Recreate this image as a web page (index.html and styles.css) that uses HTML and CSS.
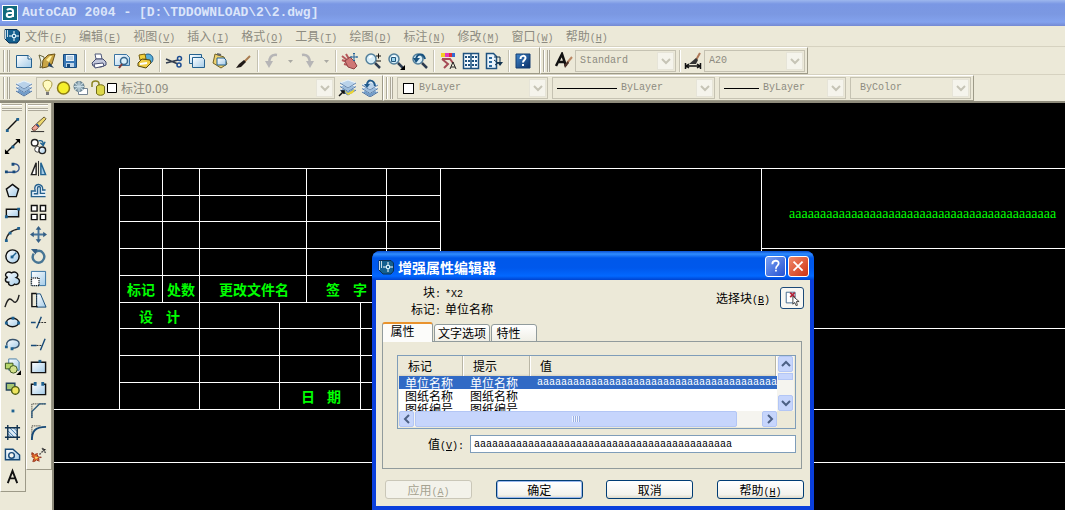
FILE: index.html
```html
<!DOCTYPE html>
<html lang="zh-CN">
<head>
<meta charset="utf-8">
<title>AutoCAD 2004 - [D:\TDDOWNLOAD\2\2.dwg]</title>
<link rel="stylesheet" href="styles.css">
</head>
<body>
<svg class="defs" aria-hidden="true">
  <defs>
    <linearGradient id="pale" x1="0" y1="0" x2="1" y2="1"><stop offset="0" stop-color="#fff"/><stop offset="1" stop-color="#a3cbe8"/></linearGradient>
    <linearGradient id="deep" x1="0" y1="0" x2="1" y2="1"><stop offset="0" stop-color="#3f86cc"/><stop offset="1" stop-color="#0b2f66"/></linearGradient>
    <symbol id="chevron" viewBox="0 0 10 8"><path d="M1 2l4 4 4-4" fill="none" stroke="currentColor" stroke-width="2"/></symbol>
    <symbol id="dwg" viewBox="0 0 16 16"><path d="M1 1.500h12l2.500 2.500v8l-2.500 3H5l-4-4z" fill="#14608f" stroke="#0b3155"/><path d="M1.500 2v9M3.500 2v7" stroke="#c8dbe6"/><path d="M10 3v10M5 8h10" stroke="#fff"/><path d="M8.500 6.500h3v3h-3z" fill="#1d5f8c" stroke="#d7f4ff"/></symbol>
    <symbol id="glass" viewBox="0 0 18 18"><circle cx="7" cy="7" r="5" fill="#d7eef8" stroke="#527f9b" stroke-width="1.500"/><path d="M5 6l3-2" stroke="#fff" stroke-width="2"/><path d="M11 11l5 5" stroke="#2d3c50" stroke-width="2.500"/></symbol>
    <symbol id="layers" viewBox="0 0 18 18"><path d="M1 12l8 5 8-5-8-4z" fill="#6f9cca" stroke="#f4f8fc"/><path d="M1 12l8 5 8-5" fill="none" stroke="#4a6d98"/><path d="M1 8.500l8 5 8-5-8-4z" fill="#9cbedf" stroke="#fff"/><path d="M1 8.500l8 5 8-5" fill="none" stroke="#557aa6"/><path d="M1 5l8 5 8-5-8-3z" fill="#b9d2ea" stroke="#e8f3fc"/><path d="M1 5l8 5 8-5" fill="none" stroke="#6485ad"/></symbol>
  </defs>
</svg>
<div class="app">
  <header class="titlebar">
    <svg class="logo" viewBox="0 0 16 16"><path d="M0 0h16v16H0z" fill="#fff"/><path d="M1 1h14v14H1z" fill="#116a7d"/><path d="M5 5c2-2 6-1 6 1v6M11 8H7c-3 0-3 4 0 4 2 0 4-1 4-3" fill="none" stroke="#fff" stroke-width="2"/></svg>
    <h1>AutoCAD 2004 - [D:\TDDOWNLOAD\2\2.dwg]</h1>
  </header>
  <nav class="menubar">
    <svg class="logo" viewBox="0 0 16 16"><use href="#dwg"/></svg>
    <a href="#">文件<span class="lat">(<u>F</u>)</span></a>
    <a href="#">编辑<span class="lat">(<u>E</u>)</span></a>
    <a href="#">视图<span class="lat">(<u>V</u>)</span></a>
    <a href="#">插入<span class="lat">(<u>I</u>)</span></a>
    <a href="#">格式<span class="lat">(<u>O</u>)</span></a>
    <a href="#">工具<span class="lat">(<u>T</u>)</span></a>
    <a href="#">绘图<span class="lat">(<u>D</u>)</span></a>
    <a href="#">标注<span class="lat">(<u>N</u>)</span></a>
    <a href="#">修改<span class="lat">(<u>M</u>)</span></a>
    <a href="#">窗口<span class="lat">(<u>W</u>)</span></a>
    <a href="#">帮助<span class="lat">(<u>H</u>)</span></a>
  </nav>

  <div class="dock">
    <div class="bar">
      <i class="grip"></i>
      <button class="tool" aria-label="New"><svg viewBox="0 0 18 18"><path d="M1.500 3.500h12l3 3v9h-15z" fill="url(#pale)" stroke="#25618f"/><path d="M13 3v4h4" fill="#fff" stroke="#25618f"/></svg></button>
      <button class="tool" aria-label="Open"><svg viewBox="0 0 18 18"><path d="M1 3l5 2v8l-4 3 1-6z" fill="#eef3e8" stroke="#65623a"/><path d="M5 8l5-5 7-1-3 10-5 3-5 1z" fill="#c9a545" stroke="#6b5318"/><path d="M8 8l4-4 2 0-3 6z" fill="#fff0a0"/><path d="M11 10l5 6-6-2z" fill="#23405e"/></svg></button>
      <button class="tool" aria-label="Save"><svg viewBox="0 0 18 18"><path d="M2.500 2.500h13v13h-12l-1-1z" fill="#3777b5" stroke="#174a7c"/><path d="M5 3h8v6H5z" fill="#e8f3fb"/><path d="M6 5h6M6 7h6" stroke="#8fb0cc"/><path d="M5 11h8v4H5z" fill="#bdd4e8"/><path d="M6 12h3v3H6z" fill="#174a7c"/></svg></button>
      <i class="sep"></i>
      <button class="tool" aria-label="Print"><svg viewBox="0 0 18 18"><path d="M5 2h6l1 5H6z" fill="#fff" stroke="#4f5879"/><path d="M2 11l4-4h7l3 3v3l-5 2-8-1z" fill="#c3c8dc" stroke="#454c70"/><path d="M4 12l9-1 1 3-9 2z" fill="#fff" stroke="#454c70"/></svg></button>
      <button class="tool" aria-label="Preview"><svg viewBox="0 0 18 18"><path d="M1.500 2.500h12l3 3v8h-15z" fill="url(#pale)" stroke="#3b74a2"/><circle cx="11" cy="9" r="3.500" fill="#d9f0fb" stroke="#38688c" stroke-width="1.500"/><path d="M9 12l-3 4" stroke="#7e3b3b" stroke-width="2"/></svg></button>
      <button class="tool" aria-label="Publish"><svg viewBox="0 0 18 18"><circle cx="12" cy="7" r="5" fill="#5aaed7" stroke="#1f5e8c"/><path d="M3 3l6-1 1 5-6 1z" fill="#f3d13c" stroke="#786212"/><path d="M2 11l4-4 8 1 1 3-5 5-8-2z" fill="#f0cd45" stroke="#554812"/><path d="M4 12l7-1" stroke="#fff" stroke-width="2"/></svg></button>
      <i class="sep"></i>
      <button class="tool" aria-label="Cut"><svg viewBox="0 0 18 18"><path d="M1 7l12 5M1 11l12-3" stroke="#333e4f" stroke-width="1.500"/><circle cx="14.500" cy="6.500" r="2" fill="none" stroke="#1f4e91" stroke-width="1.500"/><circle cx="14" cy="13" r="2" fill="none" stroke="#1f4e91" stroke-width="1.500"/></svg></button>
      <button class="tool" aria-label="Copy"><svg viewBox="0 0 18 18"><path d="M1.500 2.500h12v9h-12z" fill="url(#pale)" stroke="#25618f"/><path d="M4.500 5.500h10l2 2v8h-12z" fill="url(#pale)" stroke="#25618f"/></svg></button>
      <button class="tool" aria-label="Paste"><svg viewBox="0 0 18 18"><path d="M4 2l9 3 3 7-6 4-8-5z" fill="#ecd06d" stroke="#746324"/><path d="M6 6h7l2 2v5H6z" fill="url(#pale)" stroke="#25618f"/><path d="M6 2l4 1" stroke="#666" stroke-width="2"/></svg></button>
      <button class="tool" aria-label="Match properties"><svg viewBox="0 0 18 18"><path d="M16 4l-6 6" stroke="#a97b50" stroke-width="2"/><path d="M10 8l2 2-5 5-5 1 3-4z" fill="#201a18"/></svg></button>
      <i class="sep"></i>
      <button class="tool" aria-label="Undo"><svg viewBox="0 0 18 18"><path d="M14 3C8 2 6 6 6 12" fill="none" stroke="#b6b5b6" stroke-width="2.500"/><path d="M2 9h8l-4 7z" fill="#b6b5b6"/></svg></button>
      <button class="tool drop" aria-label="Undo list"><svg viewBox="0 0 18 18"><path d="M7 8h5l-2.500 3z" fill="#aaa9a3"/></svg></button>
      <button class="tool" aria-label="Redo"><svg viewBox="0 0 18 18"><path d="M3 3c6-1 8 3 8 9" fill="none" stroke="#b6b5b6" stroke-width="2.500"/><path d="M7 9h8l-4 7z" fill="#b6b5b6"/></svg></button>
      <button class="tool drop" aria-label="Redo list"><svg viewBox="0 0 18 18"><path d="M7 8h5l-2.500 3z" fill="#aaa9a3"/></svg></button>
      <i class="sep"></i>
      <button class="tool" aria-label="Pan"><svg viewBox="0 0 18 18"><path d="M1 4l5 4M1 8l5 2M5 2l3 5M3 12l4 1" stroke="#b5585a" stroke-width="2"/><path d="M4 9l5-4 4 4 3 5-3 3-6-2z" fill="#cf7775" stroke="#8d4244"/><path d="M13 1v8M9.500 5h7M12 2l1-1 1 1M12 8l1 1 1-1M10 4v2M16 4v2" stroke="#27649a" fill="none"/></svg></button>
      <button class="tool" aria-label="Zoom realtime"><svg viewBox="0 0 18 18"><use href="#glass"/><path d="M12 4h5M14.500 1.500v5M12 9h5" stroke="#111"/></svg></button>
      <button class="tool" aria-label="Zoom window"><svg viewBox="0 0 18 18"><use href="#glass"/><path d="M4.500 5.500h4v4h-4z" fill="#9bd4ef" stroke="#24577a"/><path d="M18 13v5h-5z"/></svg></button>
      <button class="tool" aria-label="Zoom previous"><svg viewBox="0 0 18 18"><use href="#glass" x="1"/><path d="M15 7C13 0 7 2 6 7" fill="none" stroke="#17527f" stroke-width="2"/><path d="M3 6h7l-4 5z" fill="#17527f"/></svg></button>
      <i class="sep"></i>
      <button class="tool" aria-label="Properties"><svg viewBox="0 0 18 18"><path d="M2 1h4v4H2z" fill="#f1cf26"/><path d="M6 1h4v4H6z" fill="#e336be"/><path d="M10 1h3v4h-3z" fill="#df2c35"/><path d="M13 1h3v4h-3z" fill="#346bd2"/><path d="M3 7h8l3 4M3 7l6 5-4 4" fill="none" stroke="#a54b55" stroke-width="2"/><path d="M11 17l3-7 3 7M12 15h4" stroke="#222" fill="none"/></svg></button>
      <button class="tool" aria-label="Design center"><svg viewBox="0 0 18 18"><path d="M1.500 1.500h15v15h-15zM9 2v14" fill="#f3f9fe" stroke="#1d517e" stroke-width="1.500"/><path d="M3 5h5M10 5h5M3 9h5M10 9h5M3 13h5M10 13h5" stroke="#1d517e" stroke-width="2" stroke-dasharray="2 1"/></svg></button>
      <button class="tool" aria-label="Tool palettes"><svg viewBox="0 0 18 18"><path d="M1.500 1.500h7l3 3v12h-10z" fill="#eaf4fc" stroke="#1d517e" stroke-width="1.500"/><path d="M4 5h3v2H4zM4 9h3v2H4zM4 13h3v2H4z" fill="#2c699d"/><path d="M9 5h6v6M9 8l4 3-3 2" stroke="#12324e" fill="none"/><path d="M12 10h6l-3 4z" fill="#12324e"/></svg></button>
      <i class="sep"></i>
      <button class="tool" aria-label="Help"><svg viewBox="0 0 18 18"><path d="M2 2h14v14H2z" fill="url(#deep)" stroke="#123d70"/><path d="M6.500 7c0-4 5-4 5-1 0 2-2.500 2-2.500 4.500" fill="none" stroke="#fff" stroke-width="2"/><path d="M8 12h2v2H8z" fill="#fff"/></svg></button>
    </div>
    <div class="bar">
      <i class="grip"></i>
      <button class="tool" aria-label="Text style"><svg viewBox="0 0 18 18"><path d="M1 14L7 2l4 12M4 10h6" fill="none" stroke="#111" stroke-width="2.500"/><path d="M17 5l-5 6" stroke="#b98561" stroke-width="2"/><path d="M13 9l1 2-4 5-1-3z" fill="#4a3028"/></svg></button>
      <label class="combo w100"><select aria-label="Text style"><option>Standard</option></select><span class="arrow"><svg><use href="#chevron"/></svg></span></label>
      <i class="sep thin"></i>
      <button class="tool" aria-label="Dimension style"><svg viewBox="0 0 18 18"><path d="M1.500 11v6M16.500 11v6M2 14h14M5 12l-3 2 3 2M13 12l3 2-3 2" stroke="#111" fill="none" stroke-width="1.500"/><path d="M16 1l-4 7" stroke="#ae7858" stroke-width="2"/><path d="M12 6l2 2-2 4H5z" fill="#333"/></svg></button>
      <label class="combo w100"><select aria-label="Dimension style"><option>A20</option></select><span class="arrow"><svg><use href="#chevron"/></svg></span></label>
    </div>
  </div>

  <div class="dock">
    <div class="bar layerbar">
      <i class="grip"></i>
      <button class="tool" aria-label="Layer manager"><svg viewBox="0 0 18 18"><use href="#layers"/></svg></button>
      <label class="combo layer">
        <svg class="states" viewBox="0 0 76 18"><path d="M5 12c0-3-3-3-3-7 0-5 9-5 9 0 0 4-3 4-3 7z" fill="#fffbc0" stroke="#a99a45"/><path d="M5 13h3v3H5z" fill="#777" /><circle cx="22.500" cy="9" r="6" fill="#f5ef2c" stroke="#8b7b13" stroke-width="1.500"/><path d="M37.500 9.500h9v6h-9z" fill="#fff" stroke="#768593"/><circle cx="38" cy="7.500" r="5" fill="#8ca4b0" stroke="#587486"/><path d="M38 2v11M33 7.500h10M34 4l8 7M42 4l-8 7" stroke="#c9dce5"/><path d="M51 8V5c0-4 7-4 7 0v4" fill="none" stroke="#8c8421" stroke-width="1.500"/><path d="M55.500 8c0-3 8-3 8 0v6c0 3-8 3-8 0z" fill="#dcd74a" stroke="#716c16"/><path d="M66.500 4.500h9v9h-9z" fill="#fff" stroke="#000"/></svg>
        <select aria-label="Layer" class="cjk"><option>标注0.09</option></select><span class="arrow"><svg><use href="#chevron"/></svg></span></label>
      <button class="tool" aria-label="Make layer current"><svg viewBox="0 0 18 18"><use href="#layers" x="1" y="-1"/><path d="M6 11l4 3 7-4-2 4-5 2z" fill="#edd52f"/><path d="M1 17l5-5M3 12h3v3" stroke="#111" fill="none" stroke-width="1.500"/></svg></button>
      <button class="tool" aria-label="Layer previous"><svg viewBox="0 0 18 18"><use href="#layers" y="1"/><path d="M14 7C13 0 6 0 6 6" fill="none" stroke="#205a8c" stroke-width="2"/><path d="M3 5h6l-3 4z" fill="#205a8c"/></svg></button>
    </div>
    <div class="bar wide">
      <i class="grip"></i>
      <label class="combo color"><i class="swatch"></i><select aria-label="Color"><option>ByLayer</option></select><span class="arrow"><svg><use href="#chevron"/></svg></span></label>
      <label class="combo ltype"><i class="rule"></i><select aria-label="Linetype"><option>ByLayer</option></select><span class="arrow"><svg><use href="#chevron"/></svg></span></label>
      <label class="combo weight"><i class="rule"></i><select aria-label="Lineweight"><option>ByLayer</option></select><span class="arrow"><svg><use href="#chevron"/></svg></span></label>
      <label class="combo plot"><select aria-label="Plot style"><option>ByColor</option></select><span class="arrow"><svg><use href="#chevron"/></svg></span></label>
    </div>
  </div>

  <main class="work">
    <aside class="palettes">
      <div class="palette">
        <i class="hgrip"></i>
        <button aria-label="Line"><svg viewBox="0 0 18 18"><path d="M3 15L15 3" stroke="#111" stroke-width="1.500"/><path d="M2 14h3v3H2zM13 2h3v3h-3z" fill="#1f6291"/></svg></button>
        <button aria-label="Construction line"><svg viewBox="0 0 18 18"><path d="M2 16L16 2" stroke="#111" stroke-width="1.500"/><path d="M1 17v-5l5 5zM17 1v5l-5-5z"/><path d="M8 8h3v3H8z" fill="#1f6291"/></svg></button>
        <button aria-label="Polyline"><svg viewBox="0 0 18 18"><path d="M3 13h8M9 4c9-1 9 9 2 9" fill="none" stroke="#3a5a91" stroke-width="1.500"/><path d="M1 11h3v3H1zM9 11h3v3H9zM8 3h3v3H8z" fill="#174a78"/></svg></button>
        <button aria-label="Polygon"><svg viewBox="0 0 18 18"><path d="M9 2.500l6.500 5-2.500 8H5l-2.500-8z" fill="url(#pale)" stroke="#111" stroke-width="1.500"/></svg></button>
        <button aria-label="Rectangle"><svg viewBox="0 0 18 18"><path d="M2.500 5.500h13v8h-13z" fill="url(#pale)" stroke="#111" stroke-width="1.500"/><path d="M1 12h3v3H1zM14 4h3v3h-3z" fill="#1f6291"/></svg></button>
        <button aria-label="Arc"><svg viewBox="0 0 18 18"><path d="M2 16C3 8 8 4 16 3" fill="none" stroke="#222" stroke-width="1.500"/><path d="M1 14h3v3H1zM5 6h3v3H5zM14 1h3v3h-3z" fill="#1f6291"/></svg></button>
        <button aria-label="Circle"><svg viewBox="0 0 18 18"><circle cx="9" cy="9" r="7" fill="url(#pale)" stroke="#111" stroke-width="1.500"/><path d="M9 9l4-4" stroke="#1f6291" stroke-width="1.500"/><path d="M7 8h3v3H7z" fill="#1f6291"/></svg></button>
        <button aria-label="Revision cloud"><svg viewBox="0 0 18 18"><path d="M4 8C-1 6 3 0 8 3c5-3 9 3 5 5 6 2 3 9-2 7-3 3-7 1-6-2-5 0-4-5-1-5z" fill="url(#pale)" stroke="#111" stroke-width="1.500"/></svg></button>
        <button aria-label="Spline"><svg viewBox="0 0 18 18"><path d="M1 16C5 3 8 8 10 10c3 3 5-2 6-7" fill="none" stroke="#222" stroke-width="1.500"/></svg></button>
        <button aria-label="Ellipse"><svg viewBox="0 0 18 18"><ellipse cx="9" cy="9" rx="6.500" ry="4.500" fill="url(#pale)" stroke="#111" stroke-width="1.500"/><path d="M1 8h3v3H1zM14 8h3v3h-3zM8 3h3v3H8z" fill="#1f6291"/></svg></button>
        <button aria-label="Ellipse arc"><svg viewBox="0 0 18 18"><path d="M3 10C1 2 16 2 16 8c0 4-4 5-7 5" fill="url(#pale)" stroke="#37536d" stroke-width="1.500"/><path d="M1 10h3v3H1zM7 12h3v3H7z" fill="#1f6291"/></svg></button>
        <button aria-label="Insert block"><svg viewBox="0 0 18 18"><path d="M5 1h8l3 3v9H5z" fill="url(#pale)" stroke="#447ba5"/><path d="M1.500 5.500h8v6h-8z" fill="#b6d76b" stroke="#345018"/><circle cx="10" cy="12" r="4" fill="#d3e08b" stroke="#345018"/><path d="M18 13v5h-5z"/></svg></button>
        <button aria-label="Make block"><svg viewBox="0 0 18 18"><path d="M2.500 3.500h9v7h-9z" fill="#a6c774" stroke="#24445b" stroke-width="1.500"/><circle cx="12" cy="11" r="4" fill="#eee55e" stroke="#4b5a13" stroke-width="1.500"/></svg></button>
        <button aria-label="Point"><svg viewBox="0 0 18 18"><path d="M8 8h3v3H8z" fill="#1f6291"/></svg></button>
        <button aria-label="Hatch"><svg viewBox="0 0 18 18"><path d="M4 4h10v10H4z" fill="#dceaf5"/><path d="M4 7l7 7M4 10l4 4M6 4l8 8M10 4l4 4M4 13l1 1" stroke="#3573a9"/><path d="M4 1v16M14 1v16M1 4h16M1 14h16" stroke="#12324e" stroke-width="1.500"/></svg></button>
        <button aria-label="Region"><svg viewBox="0 0 18 18"><path d="M1.500 3.500h8l7 6v5h-15z" fill="url(#pale)" stroke="#174a78" stroke-width="1.500"/><circle cx="8" cy="10" r="3" fill="#f4f4ee" stroke="#174a78" stroke-width="1.500"/></svg></button>
        <button aria-label="Text"><svg viewBox="0 0 18 18"><path d="M4 16L9 3l5 13M6 11h6" fill="none" stroke="#111" stroke-width="2"/></svg></button>
      </div>
      <div class="palette">
        <i class="hgrip"></i>
        <button aria-label="Erase"><svg viewBox="0 0 18 18"><path d="M1 16.500h14" stroke="#222"/><path d="M15 1l2 2-7 8-3-3z" fill="#ecd76d" stroke="#5e5130"/><path d="M8 8l2 3-1 1-3-3z" fill="#2d5da0"/><path d="M6 9l3 3-3 3H3l-1-2z" fill="#f0a596" stroke="#6a3b31"/></svg></button>
        <button aria-label="Copy object"><svg viewBox="0 0 18 18"><circle cx="5" cy="5" r="3.500" fill="#fff" stroke="#222" stroke-width="1.500"/><circle cx="8" cy="12" r="3" fill="#fff" stroke="#333"/><circle cx="13" cy="13" r="3.500" fill="url(#pale)" stroke="#222" stroke-width="1.500"/><path d="M9 3c4-1 5 1 5 4M11 5l3 3 2-4" fill="none" stroke="#1f6291" stroke-width="1.500"/></svg></button>
        <button aria-label="Mirror"><svg viewBox="0 0 18 18"><path d="M6.500 3v12.500H1.500z" fill="#fff" stroke="#222" stroke-width="1.500"/><path d="M11.500 3v12.500h5z" fill="#a5cae5" stroke="#1f6291" stroke-width="1.500"/><path d="M9 1v16" stroke="#222"/></svg></button>
        <button aria-label="Offset"><svg viewBox="0 0 18 18"><path d="M16.500 15.500h-15v-6h4c-3-9 9-9 8-1h3" fill="#e4eff8" stroke="#25608d" stroke-width="1.500"/><path d="M4 12.500h4V7c0-3 3-3 3 0v5h5" fill="none" stroke="#25608d" stroke-width="1.500"/></svg></button>
        <button aria-label="Array"><svg viewBox="0 0 18 18"><path d="M1.500 1.500h6v6h-6zM11 1.500h5.500v6H11zM1.500 11h6v5.500h-6zM11 11h5.500v5.500H11z" fill="#fff" stroke="#111" stroke-width="1.500"/></svg></button>
        <button aria-label="Move"><svg viewBox="0 0 18 18"><path d="M9 3v12M3 9h12" stroke="#47749a" stroke-width="2"/><path d="M9 0l3 4H6zM9 18l3-4H6zM0 9l4-3v6zM18 9l-4-3v6z" fill="#355f85"/></svg></button>
        <button aria-label="Rotate"><svg viewBox="0 0 18 18"><path d="M6 4c7-4 12 5 7 10-5 4-13-1-9-8" fill="none" stroke="#477594" stroke-width="2.500"/><path d="M1 1h7l-2 6z" fill="#355f85"/></svg></button>
        <button aria-label="Scale"><svg viewBox="0 0 18 18"><path d="M1.500 1.500h15v15h-15z" fill="url(#pale)" stroke="#3270a0"/><path d="M1.500 8.500h8v8h-8z" fill="#fff" stroke="#111" stroke-dasharray="1 1" stroke-width="1.500"/></svg></button>
        <button aria-label="Stretch"><svg viewBox="0 0 18 18"><path d="M7 2h4l6 14H7z" fill="url(#pale)" stroke="#174a78"/><path d="M7 1.500H2v14h6" fill="none" stroke="#111" stroke-width="1.500"/><path d="M7 2v14" stroke="#111" stroke-dasharray="1 1"/></svg></button>
        <button aria-label="Trim"><svg viewBox="0 0 18 18"><path d="M1 9h5M12 3L7 15" stroke="#174a78" stroke-width="1.500"/><path d="M9 9h8" stroke="#222" stroke-dasharray="2 1"/></svg></button>
        <button aria-label="Extend"><svg viewBox="0 0 18 18"><path d="M1 10h6M16 3l-5 12" stroke="#174a78" stroke-width="1.500"/><path d="M7 10h6" stroke="#222" stroke-dasharray="2 1"/></svg></button>
        <button aria-label="Break at point"><svg viewBox="0 0 18 18"><path d="M1.500 4.500h15v11h-15z" fill="url(#pale)" stroke="#111" stroke-width="1.500"/><path d="M9 2h3v3H9z" fill="#1f6291"/></svg></button>
        <button aria-label="Break"><svg viewBox="0 0 18 18"><path d="M4 4.500H1.500v11h15v-11H14" fill="url(#pale)" stroke="#111" stroke-width="1.500"/><path d="M4 2h3v4H4zM12 2h3v4h-3z" fill="#1f6291"/></svg></button>
        <button aria-label="Chamfer"><svg viewBox="0 0 18 18"><path d="M2 17V2h15" fill="none" stroke="#111" stroke-dasharray="1 1"/><path d="M2 17v-7l8-8h7" fill="none" stroke="#315c7d" stroke-width="1.500"/></svg></button>
        <button aria-label="Fillet"><svg viewBox="0 0 18 18"><path d="M2 12V2h9" fill="none" stroke="#111" stroke-dasharray="1 1"/><path d="M2 17c0-9 3-14 15-14" fill="none" stroke="#174a78" stroke-width="2"/></svg></button>
        <button aria-label="Explode"><svg viewBox="0 0 18 18"><path d="M10 9l5-5M13 2l1 3 3-1M15 6l2 1" stroke="#555" stroke-width="1.500" stroke-dasharray="2 1"/><path d="M2 7l3 2 3-1v3l4 1-3 1 1 3-3-1-4 2 1-4-2-2z" fill="#d9642b" stroke="#8c2c19" stroke-dasharray="3 1"/><path d="M5 11l4 1-3 2z" fill="#ffe06b"/></svg></button>
      </div>
    </aside>

    <section class="canvas">
      <svg class="drawing" aria-label="Title block drawing">
        <g class="lines">
          <path d="M65 65.500H1600M65 92.500H387M65 118.500H387M65 145.500H387M65 172.500H387M65 199.500H387M65 225.500H387M65 252.500H387M65 279.500H387M0 306.500H1600M0 359.500H1600M707 145.500H1600M707 225.500H1600"/>
          <path d="M65.500 65v242M108.500 65v135M145.500 65v242M252.500 65v135M332.500 65v135M386.500 65v135M225.500 199v108M306.500 199v108M707.500 65v161"/>
        </g>
        <g class="notes">
          <text x="73" y="192">标记</text>
          <text x="113" y="192">处数</text>
          <text x="165" y="192">更改文件名</text>
          <text x="272" y="192">签</text><text x="299" y="192">字</text>
          <text x="85" y="219">设</text><text x="112" y="219">计</text>
          <text x="247" y="299">日</text><text x="273" y="299">期</text>
          <text x="735" y="115" class="value">aaaaaaaaaaaaaaaaaaaaaaaaaaaaaaaaaaaaaaaaaaa</text>
        </g>
      </svg>

      <form class="dialog" role="dialog" aria-labelledby="dlg-title">
        <div class="caption">
          <svg class="logo" viewBox="0 0 16 16"><use href="#dwg"/></svg>
          <h2 id="dlg-title">增强属性编辑器</h2>
          <button type="button" class="cap help" aria-label="帮助"><svg viewBox="0 0 21 21"><path d="M7 8c0-5 7-5 7-1 0 3-3 2-3 6M10 15h2" fill="none" stroke="#fff" stroke-width="2"/></svg></button>
          <button type="button" class="cap close" aria-label="关闭"><svg viewBox="0 0 21 21"><path d="M5 5l10 10M15 5L5 15" stroke="#fff" stroke-width="2"/></svg></button>
        </div>
        <div class="content">
          <div class="info">
            <dl>
              <dt>块<span class="lat">:</span></dt><dd><span class="lat">*X2</span></dd>
              <dt>标记<span class="lat">:</span></dt><dd>单位名称</dd>
            </dl>
            <label class="pick" for="pick">选择块<span class="lat">(<u>B</u>)</span></label>
            <button type="button" id="pick" class="pickbtn"><svg viewBox="0 0 18 18"><path d="M2.500 2.500h10v12h-10z" fill="#fff" stroke="#345f86"/><path d="M7 3l5 5M12 3L7 8" stroke="#b3263a" stroke-width="2"/><path d="M10 7v9l2-2 2 4 1-1-1-4h3z" fill="#fff" stroke="#333"/></svg></button>
          </div>
          <div class="tabs" role="tablist">
            <button type="button" role="tab" aria-selected="true" class="tab on">属性</button>
            <button type="button" role="tab" class="tab">文字选项</button>
            <button type="button" role="tab" class="tab last">特性</button>
          </div>
          <div class="panel">
            <div class="list">
              <div class="rows">
                <table>
                  <thead><tr><th class="c1">标记</th><th class="c2">提示</th><th>值</th></tr></thead>
                  <tbody>
                    <tr class="sel"><td>单位名称</td><td>单位名称</td><td><span class="lat">aaaaaaaaaaaaaaaaaaaaaaaaaaaaaaaaaaaaaaaaaaa</span></td></tr>
                    <tr><td>图纸名称</td><td>图纸名称</td><td></td></tr>
                    <tr><td>图纸编号</td><td>图纸编号</td><td></td></tr>
                  </tbody>
                </table>
              </div>
              <div class="vbar">
                <button type="button" class="sb up" aria-label="Up"><svg><use href="#chevron"/></svg></button>
                <i class="vthumb"></i>
                <button type="button" class="sb down" aria-label="Down"><svg><use href="#chevron"/></svg></button>
              </div>
              <div class="hbar">
                <button type="button" class="sb left" aria-label="Left"><svg><use href="#chevron"/></svg></button>
                <i class="hthumb"></i>
                <button type="button" class="sb right" aria-label="Right"><svg><use href="#chevron"/></svg></button>
              </div>
            </div>
            <div class="field">
              <label for="val">值<span class="lat">(<u>V</u>):</span></label>
              <input id="val" type="text" value="aaaaaaaaaaaaaaaaaaaaaaaaaaaaaaaaaaaaaaaaaaa">
            </div>
          </div>
          <div class="actions">
            <button type="button" class="btn" disabled>应用<span class="lat">(<u>A</u>)</span></button>
            <button type="button" class="btn default">确定</button>
            <button type="button" class="btn">取消</button>
            <button type="button" class="btn">帮助<span class="lat">(<u>H</u>)</span></button>
          </div>
        </div>
      </form>
    </section>
  </main>
</div>
</body>
</html>
```

FILE: styles.css
```css
* { box-sizing: border-box; }
body {
  margin: 0;
  background: #ece9d8;
  color: #000;
  font: 12px/16px "Noto Sans CJK SC", sans-serif;
}
button, input, select { font: inherit; color: inherit; margin: 0; }
button { padding: 0; border: 0; background: none; }
.defs { position: absolute; width: 0; height: 0; }
.lat { font-family: "Liberation Mono", monospace; font-size: 10px; line-height: 10px; }
.logo { width: 16px; height: 16px; flex: none; }

.app { display: flex; flex-direction: column; height: 100vh; overflow: hidden; }

.titlebar {
  display: flex;
  align-items: center;
  gap: 4px;
  height: 26px;
  flex: none;
  padding: 0 2px;
  background: linear-gradient(#9db7ee 0, #7a97e4 4px, #7b98e2 14px, #83a2ee 22px, #7489d2);
}
.titlebar h1 {
  margin: 0;
  color: #dbe5fa;
  font: bold 13px/20px "Liberation Mono", monospace;
  white-space: pre;
}
.menubar {
  display: flex;
  align-items: center;
  gap: 12px;
  height: 20px;
  flex: none;
  padding: 0 4px;
}
.menubar .logo { margin-right: -7px; }
.menubar a { color: #8d8b80; text-decoration: none; white-space: nowrap; }

.dock { display: flex; flex: none; height: 28px; border-top: 1px solid #d6d2c0; }
.dock + .dock { height: 29px; border-bottom: 2px solid #8e8b7b; }
.bar {
  display: flex;
  align-items: center;
  padding: 0 5px 0 3px;
  border-top: 1px solid #fff;
  border-right: 1px solid #9d9a88;
  border-bottom: 1px solid #9d9a88;
}
.bar + .bar { padding: 0 2px; border-left: 1px solid #fff; }
.bar.layerbar { padding-right: 1px; }
.grip {
  width: 7px;
  height: 22px;
  margin-right: 2px;
  border: solid #aca899;
  border-width: 0 1px;
  background: linear-gradient(90deg, #fff 1px, #ece9d8 1px, #ece9d8 3px, #aca899 3px, #aca899 4px, #fff 4px, #ece9d8 5px);
}
.tool {
  display: flex;
  justify-content: center;
  align-items: center;
  width: 23px;
  height: 23px;
  flex: none;
}
.tool svg { width: 18px; height: 18px; flex: none; }
.tool.drop { width: 13px; }
.sep { width: 6px; height: 22px; background: linear-gradient(90deg, transparent 3px, #c5c2b2 3px, #c5c2b2 4px, #fff 4px, #fff 5px, transparent 5px); }
.sep.thin { width: 5px; }

.combo {
  display: flex;
  align-items: center;
  height: 22px;
  border: 1px solid #c5c2b2;
  color: #8d8b80;
}
.combo select {
  flex: 1;
  min-width: 0;
  padding: 0 4px;
  border: 0;
  background: none;
  appearance: none;
  font: 10px/18px "Liberation Mono", monospace;
}
.combo select.cjk { font: 12px/18px "Noto Sans CJK SC", sans-serif; }
.arrow {
  display: flex;
  align-items: center;
  justify-content: center;
  width: 17px;
  height: 18px;
  margin-right: 1px;
  background: #f5f4ec;
  border: 1px solid #e6e4d8;
  color: #c6c4b6;
}
.arrow svg { width: 10px; height: 8px; }
.w100 { width: 101px; }
.combo.layer { width: 299px; margin-left: 1px; padding-left: 4px; }
.states { width: 76px; height: 18px; }
.bar.wide .combo { margin-left: 4px; }
.bar.wide .combo:nth-child(2) { margin-left: 2px; }
.color { width: 151px; padding-left: 5px; }
.ltype { width: 163px; padding-left: 4px; }
.weight { width: 127px; padding-left: 4px; }
.plot { width: 121px; padding-left: 5px; }
.swatch { width: 11px; height: 11px; border: 1px solid #000; background: #fff; }
.color select { padding-left: 5px; }
.rule { width: 60px; height: 1px; background: #000; }
.weight .rule { width: 35px; }

.work { display: flex; flex: 1; min-height: 0; }
.palettes { display: flex; align-items: flex-start; width: 54px; flex: none; border-right: 2px solid #8e8b7b; }
.palette {
  display: flex;
  flex-direction: column;
  align-items: center;
  width: 26px;
  padding: 0 2px 4px 0;
  border-right: 1px solid #9d9a88;
  border-bottom: 1px solid #9d9a88;
  border-left: 1px solid #fff;
}
.hgrip {
  width: 20px;
  height: 7px;
  margin: 1px 0 2px;
  border: solid #aca899;
  border-width: 1px 0;
  background: linear-gradient(#fff 1px, #ece9d8 1px, #ece9d8 3px, #aca899 3px, #aca899 4px, #fff 4px, #ece9d8 5px);
}
.palette button { display: flex; align-items: center; justify-content: center; width: 22px; height: 22px; }
.palette svg { width: 17px; height: 17px; }

.canvas { position: relative; flex: 1; min-width: 0; background: #000; overflow: hidden; }
.drawing { display: block; width: 100%; height: 100%; }
.lines { fill: none; stroke: #fff; stroke-width: 1px; }
.notes { fill: #0f0; font: bold 14px "Noto Sans CJK SC", sans-serif; }
.notes .value { font: 14px "Liberation Serif", serif; }

.dialog {
  position: absolute;
  left: 318px;
  top: 148px;
  width: 442px;
  padding: 0 4px 4px;
  border-radius: 8px 8px 0 0;
  background: #0a3fdc;
}
.caption {
  display: flex;
  align-items: center;
  gap: 4px;
  height: 29px;
  margin: 0 -4px;
  padding: 2px 5px 0 6px;
  border-radius: 8px 8px 0 0;
  background: linear-gradient(#0a4fd0, #2f8cff 3px, #0058ea 7px, #0058ec 17px, #0268ff 25px, #0043cf);
}
.caption h2 { margin: 0; flex: 1; color: #fff; font: bold 14px/20px "Noto Sans CJK SC", sans-serif; }
.cap { width: 21px; height: 21px; border: 1px solid #fff; border-radius: 3px; background: linear-gradient(135deg, #7ba0f2, #2452d2); }
.cap + .cap { margin-left: -2px; }
.cap svg { display: block; width: 19px; height: 19px; }
.cap.close { background: linear-gradient(135deg, #f0896a, #cf3313); }

.content { padding: 4px 6px 7px; background: #ece9d8; }
.info { display: flex; align-items: flex-start; padding: 0 0 5px; }
.info dl { display: grid; grid-template-columns: 59px 1fr; grid-auto-rows: 16px; flex: 1; column-gap: 4px; row-gap: 1px; margin: 0; }
.info dt { text-align: right; }
.info dd { margin: 0; }
.pick { margin: 6px 10px 0 0; }
.pickbtn {
  display: flex;
  align-items: center;
  justify-content: center;
  width: 24px;
  height: 22px;
  margin-top: 3px;
  border: 1px solid #1c4a78;
  border-radius: 3px;
  background: #f8f7f2;
}
.pickbtn svg { width: 16px; height: 16px; }

.tabs { display: flex; align-items: flex-end; gap: 1px; height: 20px; margin-bottom: -1px; }
.tab {
  height: 18px;
  padding: 0 3px;
  border: 1px solid #919b9c;
  border-radius: 3px 3px 0 0;
  background: linear-gradient(#fff, #f0efe6);
}
.tab.on { height: 20px; width: 51px; padding: 0 16px 4px 6px; border-top: 2px solid #e9932d; border-bottom: 0; background: #fcfcfa; line-height: 14px; }
.tab.last { width: 46px; padding-right: 14px; }
.panel { width: 420px; padding: 13px 5px 15px 14px; border: 1px solid #919b9c; background: #ece9d8; }

.list {
  display: grid;
  grid-template-columns: 1fr 17px;
  grid-template-rows: 55px 16px;
  padding: 0 1px 1px 1px;
  border: 1px solid #7f9db9;
}
.rows { overflow: hidden; background: #fff; }
.rows table { width: 100%; table-layout: fixed; border-collapse: collapse; }
.rows th {
  height: 20px;
  padding: 0 0 0 9px;
  text-align: left;
  font-weight: normal;
  background: linear-gradient(90deg, transparent calc(100% - 2px), #b9b6a5 calc(100% - 2px), #b9b6a5 calc(100% - 1px), #fff calc(100% - 1px)), linear-gradient(#ece9d8 18px, #d8d4c2);
}
.rows .c1 { width: 65px; }
.rows .c2 { width: 67px; }
.rows td { padding: 0 0 0 6px; line-height: 13px; height: 13px; overflow: hidden; white-space: nowrap; }
.rows td .lat { display: block; line-height: 13px; }
.sel { background: #316ac5; color: #fff; }
.vbar { display: flex; flex-direction: column; align-items: center; background: #f5f4ef; }
.hbar { display: flex; background: #f5f4ef; }
.sb {
  display: flex;
  align-items: center;
  justify-content: center;
  width: 15px;
  height: 16px;
  flex: none;
  border: 1px solid #b3c6f5;
  border-radius: 2px;
  background: #c6d5fc;
  color: #4d6185;
}
.sb svg { width: 10px; height: 8px; }
.up svg { transform: rotate(180deg); }
.left svg { transform: rotate(90deg); }
.right svg { transform: rotate(-90deg); }
.down, .right { margin-left: auto; }
.vbar .down { margin: auto 0 0; align-self: center; }
.vthumb { width: 15px; height: 7px; margin-top: 1px; border: 1px solid #b3c6f5; background: #c6d5fc; }
.hthumb {
  width: 322px;
  margin-left: 1px;
  border: 1px solid #b3c6f5;
  border-radius: 2px;
  background: repeating-linear-gradient(90deg, #eef3ff 0, #eef3ff 1px, #9bb1e4 1px, #9bb1e4 2px) center / 8px 6px no-repeat, #c6d5fc;
}
.field { display: grid; grid-template-columns: 67px 1fr; align-items: center; column-gap: 6px; margin-top: 6px; }
.field label { text-align: right; line-height: 18px; height: 18px; }
.field input {
  min-width: 0;
  height: 18px;
  padding: 0 3px;
  border: 1px solid #7f9db9;
  background: #fff;
  font: 10px/16px "Liberation Mono", monospace;
}
.actions { display: flex; justify-content: space-between; padding: 11px 0 0 3px; }
.btn {
  width: 87px;
  height: 19px;
  border: 1px solid #003c74;
  border-radius: 3px;
  background: linear-gradient(#fff, #f3f2ec 80%, #dedacb);
  line-height: 16px;
}
.btn.default { box-shadow: inset 0 0 0 1px #9ab8ee; }
.btn:disabled { border-color: #cac7b8; background: #f3f2ea; color: #a5a291; }
```
